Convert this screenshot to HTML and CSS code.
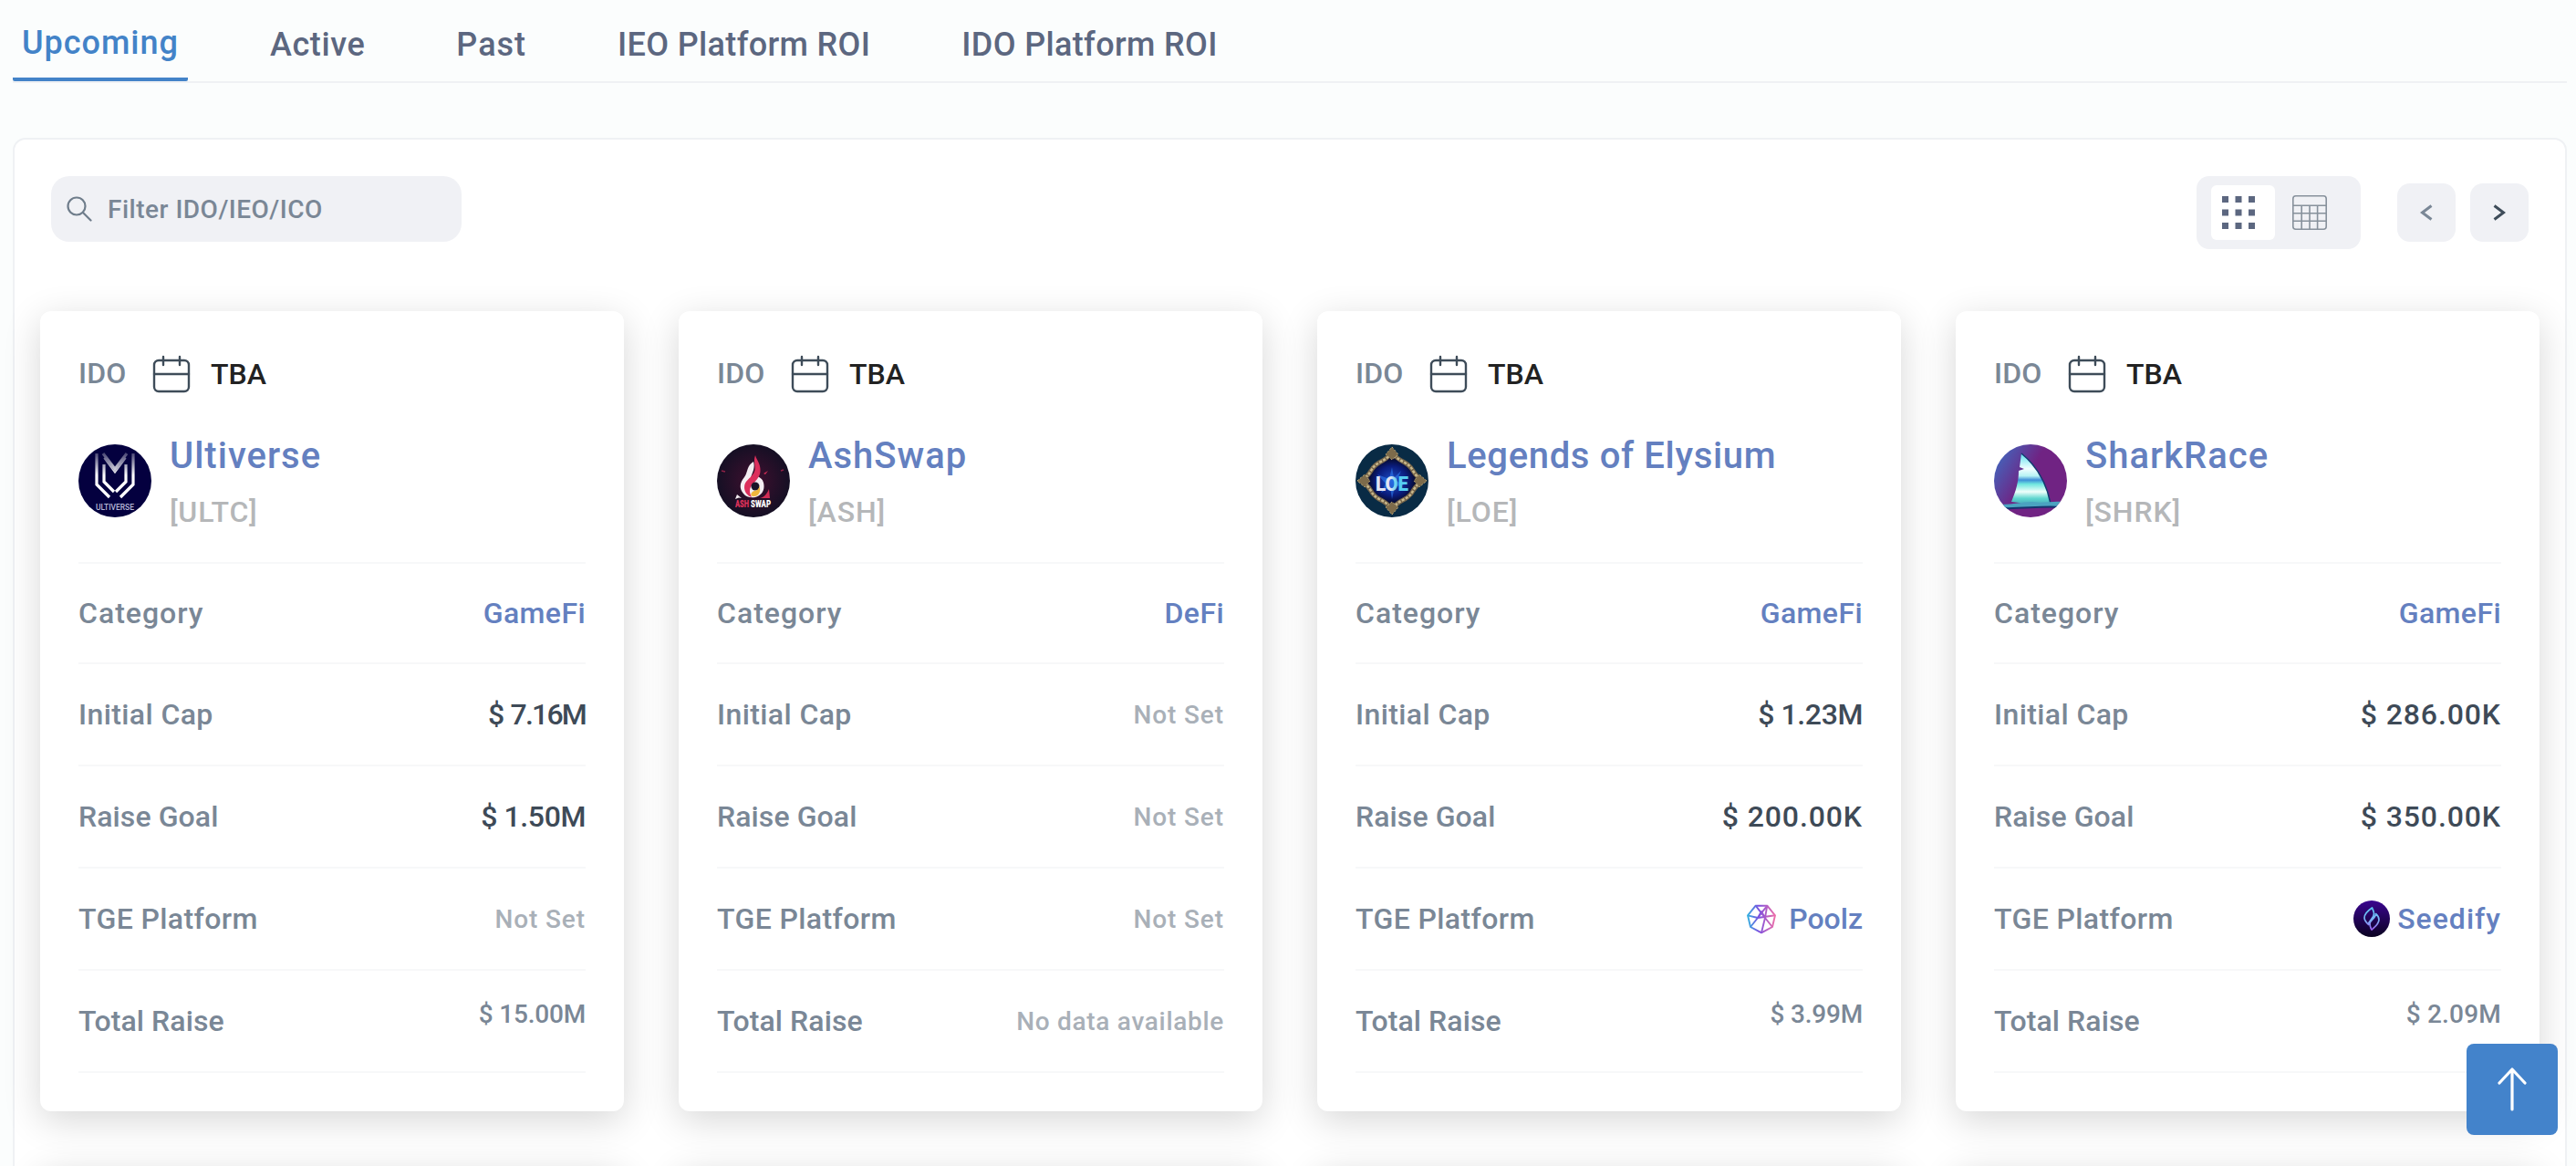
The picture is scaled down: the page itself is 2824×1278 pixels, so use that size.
FILE: index.html
```html
<!DOCTYPE html>
<html lang="en">
<head>
    <meta charset="UTF-8">
    <meta name="viewport" content="width=device-width, initial-scale=1.0">
    <title>Upcoming IDO / IEO / ICO</title>
    <link rel="stylesheet" href="styles.css">
</head>
<body>
    <!-- shared icons and gradients -->
    <svg class="defs" width="0" height="0">
        <symbol id="calendar" viewBox="0 0 42 42">
            <g fill="none" stroke="#3e4c59" stroke-width="2.4" stroke-linecap="round">
                <rect x="2" y="6" width="38" height="34" rx="5"/>
                <path d="M2 21h38M12 2v9M30 2v9"/>
            </g>
        </symbol>
        <defs>
            <linearGradient id="fade" gradientUnits="userSpaceOnUse" x1="0" y1="9" x2="0" y2="34">
                <stop offset="0" stop-color="#fff" stop-opacity=".25"/>
                <stop offset="1" stop-color="#fff"/>
            </linearGradient>
            <radialGradient id="ashBg" cx=".5" cy=".5" r=".5">
                <stop offset="0" stop-color="#40102f"/>
                <stop offset="1" stop-color="#150f24"/>
            </radialGradient>
            <radialGradient id="loeBg" cx=".5" cy=".5" r=".5">
                <stop offset="0" stop-color="#1c4fc8"/>
                <stop offset=".5" stop-color="#0a1c7c"/>
                <stop offset=".8" stop-color="#050722"/>
            </radialGradient>
            <linearGradient id="loeText" x1="0" y1="0" x2="1" y2="0">
                <stop offset=".45" stop-color="#e2e4f2"/>
                <stop offset=".65" stop-color="#55cdf2"/>
            </linearGradient>
            <linearGradient id="sharkBg" x1="0" y1=".2" x2=".7" y2=".6">
                <stop offset="0" stop-color="#4266bd"/>
                <stop offset=".65" stop-color="#702383"/>
            </linearGradient>
            <linearGradient id="sail" x1="0" y1="0" x2="0" y2="1">
                <stop offset="0" stop-color="#5fe0ee"/>
                <stop offset=".3" stop-color="#f2ffff"/>
                <stop offset=".44" stop-color="#b6f3f4"/>
                <stop offset=".52" stop-color="#3d8fd8"/>
                <stop offset=".6" stop-color="#6fe6df"/>
                <stop offset=".75" stop-color="#effffb"/>
                <stop offset=".88" stop-color="#5fd6cf"/>
                <stop offset="1" stop-color="#46a9bb"/>
            </linearGradient>
            <linearGradient id="poolz" x1="0" y1="0" x2="1" y2="0">
                <stop offset="0" stop-color="#35b0e0"/>
                <stop offset=".4" stop-color="#7a4fe0"/>
                <stop offset="1" stop-color="#ee6fa8"/>
            </linearGradient>
            <linearGradient id="seedBg" x1="0" y1="0" x2="0" y2="1">
                <stop offset="0" stop-color="#3a0590"/>
                <stop offset="1" stop-color="#0a0220"/>
            </linearGradient>
            <linearGradient id="seed" x1="0" y1="0" x2="0" y2="1">
                <stop offset="0" stop-color="#5cc8f5"/>
                <stop offset=".6" stop-color="#7fb0f5"/>
                <stop offset="1" stop-color="#9a5cf0"/>
            </linearGradient>
        </defs>
    </svg>

    <nav class="tabs">
        <a class="tab active">Upcoming</a>
        <a class="tab">Active</a>
        <a class="tab past">Past</a>
        <a class="tab roi">IEO Platform ROI</a>
        <a class="tab roi">IDO Platform ROI</a>
    </nav>

    <main class="panel">
        <div class="toolbar">
            <div class="filter">
                <svg width="28" height="28" viewBox="0 0 28 28" fill="none" stroke="#6f7d8b" stroke-width="2.2" stroke-linecap="round">
                    <circle cx="11" cy="11" r="9.5"/>
                    <path d="M18 18l8.500 8.500"/>
                </svg>
                <span>Filter IDO/IEO/ICO</span>
            </div>
            <div class="controls">
                <div class="views">
                    <div class="view selected">
                        <svg width="36" height="36" viewBox="0 0 36 36" fill="#5c6780">
                            <path d="M0 0h7v7H0zM14.500 0h7v7h-7zM29 0h7v7h-7zM0 14.500h7v7H0zM14.500 14.500h7v7h-7zM29 14.500h7v7h-7zM0 29h7v7H0zM14.500 29h7v7h-7zM29 29h7v7h-7z"/>
                        </svg>
                    </div>
                    <div class="view">
                        <svg width="38" height="38" viewBox="0 0 38 38" fill="none" stroke="#87919c" stroke-width="1.600">
                            <rect x=".8" y=".8" width="36.400" height="36.400" rx="3"/>
                            <path d="M1 11.300h36M1 19.800h36M1 28.300h36M10.200 11.300V37M19 11.300V37M27.600 11.300V37"/>
                        </svg>
                    </div>
                </div>
                <button class="page prev">
                    <svg width="14" height="18" viewBox="0 0 14 18" fill="none" stroke="currentColor" stroke-width="3"><path d="M12.500 1.500L2.500 9l10 7.500"/></svg>
                </button>
                <button class="page">
                    <svg width="14" height="18" viewBox="0 0 14 18" fill="none" stroke="currentColor" stroke-width="3"><path d="M1.500 1.500l10 7.500-10 7.500"/></svg>
                </button>
            </div>
        </div>

        <div class="cards">
            <div class="card">
                <div class="when">
                    <span class="type">IDO</span>
                    <svg class="calendar"><use href="#calendar"/></svg>
                    <span class="date">TBA</span>
                </div>
                <div class="project">
                    <svg class="avatar" viewBox="0 0 80 80">
                        <circle cx="40" cy="40" r="40" fill="#04003f"/>
                        <g fill="none" stroke="url(#fade)" stroke-width="3.200">
                            <path d="M20 10v34l14 14M60 10v34L46 58"/>
                            <path d="M28 22v19l11 11M52 22v19L41 52"/>
                            <path d="M27 10l13 17 13-17"/>
                            <path d="M28 15l12 16 12-16" stroke-width="1.500"/>
                        </g>
                        <text x="19" y="71.500" class="logo-ult" textLength="42" lengthAdjust="spacingAndGlyphs">ULTIVERSE</text>
                    </svg>
                    <div>
                        <a class="name">Ultiverse</a>
                        <span class="ticker">[ULTC]</span>
                    </div>
                </div>
                <div class="row first"><span class="category">Category</span><a class="link">GameFi</a></div>
                <div class="row"><span>Initial Cap</span><b class="tight">$ 7.16M</b></div>
                <div class="row"><span class="goal">Raise Goal</span><b>$ 1.50M</b></div>
                <div class="row"><span>TGE Platform</span><i>Not Set</i></div>
                <div class="row"><span class="goal">Total Raise</span><em>$ 15.00M</em></div>
            </div>

            <div class="card">
                <div class="when">
                    <span class="type">IDO</span>
                    <svg class="calendar"><use href="#calendar"/></svg>
                    <span class="date">TBA</span>
                </div>
                <div class="project">
                    <svg class="avatar" viewBox="0 0 80 80">
                        <circle cx="40" cy="40" r="40" fill="url(#ashBg)"/>
                        <path d="M40 19c-8 5-6 12-10 17-5 6-6 12-1 18 3 4 8 5 13 4 7-2 11-8 9-16-1-4-4-6-7-7l-7 7c-2-7 6-13 3-23z" fill="#f4eef2"/>
                        <path d="M42 12c-3 9 2 13-2 20-4 6-10 8-10 15 0 5 3 9 8 11-3-6-3-10 2-15 5-6 9-10 7-19-1-5-4-8-5-12z" fill="#dc2f5c"/>
                        <circle cx="42" cy="46" r="4.500" fill="#1a1428"/>
                        <path d="M46 45c1 6-4 5-7 7-3 3-2 5 2 5 5 0 8-6 5-12z" fill="#efb63c"/>
                        <path d="M57 49l1 10H47c5-1 8-5 10-10zM51 32l5-3-3 4z" fill="#d12c55"/>
                        <path d="M20 60l2-5 5 4-3-.5z" fill="#f4eef2"/>
                        <path d="M5 29l4 1M70 29l3-1" stroke="#8f2146" stroke-width="1.500"/>
                        <text x="20" y="68.500" class="logo-ash" fill="#e0335c" textLength="15" lengthAdjust="spacingAndGlyphs">ASH</text>
                        <text x="37" y="68.500" class="logo-ash" fill="#fff" textLength="22" lengthAdjust="spacingAndGlyphs">SWAP</text>
                    </svg>
                    <div>
                        <a class="name">AshSwap</a>
                        <span class="ticker">[ASH]</span>
                    </div>
                </div>
                <div class="row first"><span class="category">Category</span><a class="link">DeFi</a></div>
                <div class="row"><span>Initial Cap</span><i>Not Set</i></div>
                <div class="row"><span class="goal">Raise Goal</span><i>Not Set</i></div>
                <div class="row"><span>TGE Platform</span><i>Not Set</i></div>
                <div class="row"><span class="goal">Total Raise</span><i class="nodata">No data available</i></div>
            </div>

            <div class="card">
                <div class="when">
                    <span class="type">IDO</span>
                    <svg class="calendar"><use href="#calendar"/></svg>
                    <span class="date">TBA</span>
                </div>
                <div class="project">
                    <svg class="avatar" viewBox="0 0 80 80">
                        <circle cx="40" cy="40" r="40" fill="#092b45"/>
                        <path d="M40 8c3 6 8 9 14 12 5 3 7 5 9 9 3 5 6 8 11 11-5 3-8 6-11 11-2 4-4 6-9 9-6 3-11 6-14 12-3-6-8-9-14-12-5-3-7-5-9-9-3-5-6-8-11-11 5-3 8-6 11-11 2-4 4-6 9-9 6-3 11-6 14-12z" fill="url(#loeBg)" stroke="#75644a" stroke-width="5"/>
                        <path d="M40 8c3 6 8 9 14 12 5 3 7 5 9 9 3 5 6 8 11 11-5 3-8 6-11 11-2 4-4 6-9 9-6 3-11 6-14 12-3-6-8-9-14-12-5-3-7-5-9-9-3-5-6-8-11-11 5-3 8-6 11-11 2-4 4-6 9-9 6-3 11-6 14-12z" fill="none" stroke="#c9b98d" stroke-width="2.500" stroke-dasharray="3 1.500"/>
                        <path d="M40 3l7 8-7 6-7-6zM40 77l7-8-7-6-7 6zM2 40l8-7 6 7-6 7zM78 40l-8-7-6 7 6 7z" fill="#7d6b4b" stroke="#b9a87c" stroke-width="1" stroke-dasharray="2 2"/>
                        <path d="M40 25l2 12 8-8-5 11 8 5-10 1-3 14-2-13-10 6 5-10-9-10 13 5z" fill="#2f7cf0" opacity=".6"/>
                        <text x="22" y="51" class="logo-loe" fill="url(#loeText)" textLength="36" lengthAdjust="spacingAndGlyphs">LOE</text>
                    </svg>
                    <div>
                        <a class="name long">Legends of Elysium</a>
                        <span class="ticker">[LOE]</span>
                    </div>
                </div>
                <div class="row first"><span class="category">Category</span><a class="link">GameFi</a></div>
                <div class="row"><span>Initial Cap</span><b>$ 1.23M</b></div>
                <div class="row"><span class="goal">Raise Goal</span><b class="wide">$ 200.00K</b></div>
                <div class="row">
                    <span>TGE Platform</span>
                    <a class="link platform poolz">
                        <svg width="40" height="40" viewBox="0 0 40 40" fill="none" stroke="url(#poolz)" stroke-width="1.900" stroke-linejoin="round">
                            <path d="M13.700 5.700h12.600L35 16.300 32 29l-12 6.300L8 29 5 16.300z"/>
                            <path d="M13.700 5.700L24 19l8 10M26.300 5.700L16 19 8 29M35 16.300L16 19 5 16.300M20 35.300L24 19l-4-7-4 7M24 19l2.300-13.300"/>
                        </svg>
                        Poolz
                    </a>
                </div>
                <div class="row"><span class="goal">Total Raise</span><em>$ 3.99M</em></div>
            </div>

            <div class="card">
                <div class="when">
                    <span class="type">IDO</span>
                    <svg class="calendar"><use href="#calendar"/></svg>
                    <span class="date">TBA</span>
                </div>
                <div class="project">
                    <svg class="avatar" viewBox="0 0 80 80">
                        <clipPath id="round"><circle cx="40" cy="40" r="40"/></clipPath>
                        <g clip-path="url(#round)">
                            <rect width="80" height="80" fill="url(#sharkBg)"/>
                            <path d="M30 10c15 12 27 30 32 55l-18 1-25-3c5-12 8-22 8-34l6-2-5-2z" fill="url(#sail)"/>
                            <path d="M30 10c15 12 27 30 32 55" fill="none" stroke="#123a70" stroke-width="1.500"/>
                            <path d="M8 66c14 0 22-3 34-3 14 2 20-1 34 0l-4 6c-20-1-40 2-60 1z" fill="#4ba3c0"/>
                            <path d="M10 70c20 1 44-3 64-1" fill="none" stroke="#14346e" stroke-width="2"/>
                        </g>
                    </svg>
                    <div>
                        <a class="name">SharkRace</a>
                        <span class="ticker">[SHRK]</span>
                    </div>
                </div>
                <div class="row first"><span class="category">Category</span><a class="link">GameFi</a></div>
                <div class="row"><span>Initial Cap</span><b class="wide">$ 286.00K</b></div>
                <div class="row"><span class="goal">Raise Goal</span><b class="wide">$ 350.00K</b></div>
                <div class="row">
                    <span>TGE Platform</span>
                    <a class="link platform seedify">
                        <svg width="40" height="40" viewBox="0 0 40 40">
                            <circle cx="20" cy="20" r="20" fill="url(#seedBg)"/>
                            <path d="M20.500 8c-6 4-8.500 7-8.500 11 0 3 2 5 4.500 7.500 0-5 6-6.500 6-12 0-2.500-1-4-2-6.500zM24.500 14.500c3 2.500 3.500 4 3.500 6.500 0 4-3 7-8 11-2-3-2-5-2-6.500 0-4 6.500-6 6.500-11z" fill="none" stroke="url(#seed)" stroke-width="1.700" stroke-linejoin="round"/>
                        </svg>
                        Seedify
                    </a>
                </div>
                <div class="row"><span class="goal">Total Raise</span><em class="loose">$ 2.09M</em></div>
            </div>

            <!-- next row, below the fold -->
            <div class="card"></div>
            <div class="card"></div>
            <div class="card"></div>
            <div class="card"></div>
        </div>
    </main>

    <button class="to-top">
        <svg width="32" height="48" viewBox="0 0 32 48" fill="none" stroke="#fff" stroke-width="3.200" stroke-linecap="round" stroke-linejoin="round">
            <path d="M16 46V2M2 17L16 2l14 15"/>
        </svg>
    </button>
</body>
</html>
```
FILE: styles.css
```css
* {
    box-sizing: border-box;
}
html, body {
    height: 100%;
}
body {
    margin: 0;
    padding: 0 10px 0 14px;
    overflow: hidden;
    background-color: #fbfdfd;
    font-family: Roboto, "Liberation Sans", sans-serif;
    font-size: 32px;
    font-weight: 500;
    color: #7a8796;
}
.defs {
    display: block;
}
button {
    display: flex;
    align-items: center;
    justify-content: center;
    padding: 0;
    border: none;
    cursor: pointer;
}

/* tabs */
.tabs {
    display: flex;
    gap: 80px;
    height: 91px;
    border-bottom: 2px solid #eff1f4;
}
.tab {
    display: flex;
    align-items: center;
    padding: 9px 10px 0;
    font-size: 36px;
    letter-spacing: 0.6px;
    color: #5c6780;
}
.tab.past {
    letter-spacing: 1px;
}
.tab.roi {
    letter-spacing: 0.35px;
}
.tab.active {
    width: 192px;
    white-space: nowrap;
    letter-spacing: 1px;
    color: #4383c8;
    border-bottom: 4px solid #4383c8;
    border-radius: 2px;
}

/* panel */
.panel {
    margin-top: 60px;
    padding: 40px 28px;
    background-color: #fff;
    border: 2px solid #eff1f4;
    border-radius: 14px;
}
.toolbar {
    display: flex;
    justify-content: space-between;
    align-items: flex-start;
    padding: 0 12px;
}
.filter {
    display: flex;
    align-items: center;
    gap: 17px;
    width: 450px;
    height: 72px;
    padding-left: 17px;
    background-color: #f0f1f5;
    border-radius: 20px;
    font-size: 28px;
    letter-spacing: 0.5px;
}
.controls {
    display: flex;
    align-items: center;
}
.views {
    display: flex;
    gap: 19px;
    width: 180px;
    height: 80px;
    padding: 10px 16px;
    margin-right: 40px;
    background-color: #f0f1f5;
    border-radius: 14px;
}
.view {
    display: flex;
    align-items: center;
}
.view.selected {
    width: 70px;
    padding-left: 12px;
    background-color: #fff;
    border-radius: 6px;
}
.page {
    width: 64px;
    height: 64px;
    background-color: #f0f1f5;
    border-radius: 14px;
    color: #3e4c59;
}
.page.prev {
    margin-right: 16px;
    color: #7a8796;
}

/* cards */
.cards {
    display: grid;
    grid-template-columns: repeat(4, 640px);
    gap: 60px;
    margin-top: 68px;
}
.card {
    height: 877px;
    padding: 49px 42px 0;
    background-color: #fff;
    border-radius: 12px;
    box-shadow: 0 10px 40px rgba(0, 0, 0, 0.16);
}
.when {
    display: flex;
    align-items: center;
    height: 40px;
}
.type {
    width: 54px;
    padding-bottom: 2px;
    letter-spacing: 0.2px;
}
.calendar {
    width: 42px;
    height: 42px;
    margin: 0 22px 0 27px;
}
.date {
    color: #222;
}
.project {
    display: flex;
    gap: 20px;
    margin-top: 39px;
    height: 149px;
    border-bottom: 2px solid #f7f8f9;
}
.avatar {
    width: 80px;
    height: 80px;
    margin-top: 18px;
}
.name {
    display: block;
    font-size: 40px;
    line-height: 62px;
    letter-spacing: 1px;
    color: #6480c0;
}
.name.long {
    letter-spacing: 0.65px;
}
.ticker {
    display: block;
    line-height: 60px;
    letter-spacing: 0.9px;
    color: #b5b7b9;
}
.row {
    display: flex;
    justify-content: space-between;
    align-items: center;
    height: 112px;
    letter-spacing: 0.4px;
    border-bottom: 2px solid #f7f8f9;
}
.row.first {
    margin-top: -2px;
    padding-top: 2px;
}
.category {
    letter-spacing: 1px;
}
.goal {
    letter-spacing: 0.1px;
}
.row b {
    font-weight: 500;
    letter-spacing: -0.4px;
    color: #3e4a57;
}
.row b.tight {
    letter-spacing: -1.8px;
    word-spacing: 2px;
}
.row b.wide {
    letter-spacing: 0.9px;
}
.row i {
    font-style: normal;
    font-size: 28px;
    letter-spacing: 0.9px;
    color: #a9b0b8;
}
.row i.nodata {
    letter-spacing: 0.7px;
}
.row em {
    font-style: normal;
    font-size: 28px;
    letter-spacing: -0.2px;
    padding-bottom: 16px;
}
.row em.loose {
    letter-spacing: 0.2px;
}
.link {
    color: #6480c0;
}
.platform {
    display: flex;
    align-items: center;
    gap: 10px;
}
.platform.poolz {
    letter-spacing: 0;
}
.platform.seedify {
    gap: 8px;
    letter-spacing: 1px;
}

/* lettering inside the logos */
.logo-ult {
    font-size: 9px;
    fill: #b9b9d8;
}
.logo-ash {
    font-size: 10px;
    font-weight: 900;
}
.logo-loe {
    font-size: 22px;
    font-weight: 900;
}

/* back to top */
.to-top {
    position: fixed;
    right: 20px;
    bottom: 34px;
    width: 100px;
    height: 100px;
    background-color: #4383cb;
    border-radius: 8px;
}
```
